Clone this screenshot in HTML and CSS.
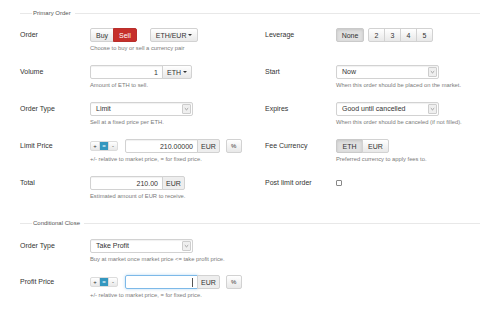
FILE: index.html
```html
<!DOCTYPE html>
<html lang="en">
<head>
    <meta charset="UTF-8">
    <meta name="viewport" content="width=device-width, initial-scale=1.0">
    <title>Place Order</title>
    <link rel="stylesheet" href="styles.css">
</head>
<body>

<main class="page">

    <!-- Primary order -->
    <section class="section">
        <div class="legend">Primary Order</div>

        <div class="form-grid">
            <div class="label">Order</div>
            <div class="control">
                <div class="line">
                    <div class="btn-group">
                        <button class="btn">Buy</button>
                        <button class="btn btn-danger">Sell</button>
                    </div>
                    <button class="btn pair-button">ETH/EUR <span class="caret"></span></button>
                </div>
                <p class="help">Choose to buy or sell a currency pair</p>
            </div>

            <div class="label">Leverage</div>
            <div class="control">
                <div class="line">
                    <div class="btn-group">
                        <button class="btn btn-active lev-none">None</button>
                    </div>
                    <div class="btn-group lev-group">
                        <button class="btn lev">2</button>
                        <button class="btn lev">3</button>
                        <button class="btn lev">4</button>
                        <button class="btn lev">5</button>
                    </div>
                </div>
            </div>

            <div class="label">Volume</div>
            <div class="control">
                <div class="line">
                    <div class="input-group">
                        <div class="field">1</div>
                        <button class="btn addon-btn">ETH <span class="caret"></span></button>
                    </div>
                </div>
                <p class="help">Amount of ETH to sell.</p>
            </div>

            <div class="label">Start</div>
            <div class="control">
                <div class="line">
                    <div class="select">
                        <span class="select-text">Now</span>
                        <span class="select-arrow"><svg width="5" height="4" viewBox="0 0 5 4"><path d="M0.8 1.2 L2.5 2.8 L4.2 1.2" fill="none" stroke="#888" stroke-width="0.8"/></svg></span>
                    </div>
                </div>
                <p class="help">When this order should be placed on the market.</p>
            </div>

            <div class="label">Order Type</div>
            <div class="control">
                <div class="line">
                    <div class="select">
                        <span class="select-text">Limit</span>
                        <span class="select-arrow"><svg width="5" height="4" viewBox="0 0 5 4"><path d="M0.8 1.2 L2.5 2.8 L4.2 1.2" fill="none" stroke="#888" stroke-width="0.8"/></svg></span>
                    </div>
                </div>
                <p class="help">Sell at a fixed price per ETH.</p>
            </div>

            <div class="label">Expires</div>
            <div class="control">
                <div class="line">
                    <div class="select">
                        <span class="select-text">Good until cancelled</span>
                        <span class="select-arrow"><svg width="5" height="4" viewBox="0 0 5 4"><path d="M0.8 1.2 L2.5 2.8 L4.2 1.2" fill="none" stroke="#888" stroke-width="0.8"/></svg></span>
                    </div>
                </div>
                <p class="help">When this order should be canceled (if not filled).</p>
            </div>

            <div class="label">Limit Price</div>
            <div class="control">
                <div class="line">
                    <div class="btn-group mode-group">
                        <button class="btn btn-xs">+</button>
                        <button class="btn btn-xs btn-info">=</button>
                        <button class="btn btn-xs">-</button>
                    </div>
                    <div class="input-group">
                        <div class="field">210.00000</div>
                        <span class="addon">EUR</span>
                    </div>
                    <button class="btn percent">%</button>
                </div>
                <p class="help">+/- relative to market price, = for fixed price.</p>
            </div>

            <div class="label">Fee Currency</div>
            <div class="control">
                <div class="line">
                    <div class="btn-group">
                        <button class="btn btn-active fee">ETH</button>
                        <button class="btn fee">EUR</button>
                    </div>
                </div>
                <p class="help">Preferred currency to apply fees to.</p>
            </div>

            <div class="label">Total</div>
            <div class="control">
                <div class="line">
                    <div class="input-group">
                        <div class="field">210.00</div>
                        <span class="addon">EUR</span>
                    </div>
                </div>
                <p class="help">Estimated amount of EUR to receive.</p>
            </div>

            <div class="label">Post limit order</div>
            <div class="control">
                <div class="line">
                    <span class="checkbox"></span>
                </div>
            </div>
        </div>
    </section>

    <!-- Conditional close -->
    <section class="section conditional">
        <div class="legend">Conditional Close</div>

        <div class="form-grid">
            <div class="label">Order Type</div>
            <div class="control">
                <div class="line">
                    <div class="select">
                        <span class="select-text">Take Profit</span>
                        <span class="select-arrow"><svg width="5" height="4" viewBox="0 0 5 4"><path d="M0.8 1.2 L2.5 2.8 L4.2 1.2" fill="none" stroke="#888" stroke-width="0.8"/></svg></span>
                    </div>
                </div>
                <p class="help">Buy at market once market price &lt;= take profit price.</p>
            </div>
            <div></div>
            <div></div>

            <div class="label">Profit Price</div>
            <div class="control">
                <div class="line">
                    <div class="btn-group mode-group">
                        <button class="btn btn-xs">+</button>
                        <button class="btn btn-xs btn-info">=</button>
                        <button class="btn btn-xs">-</button>
                    </div>
                    <div class="input-group">
                        <div class="field field-focus"><span class="text-caret"></span></div>
                        <span class="addon">EUR</span>
                    </div>
                    <button class="btn percent">%</button>
                </div>
                <p class="help">+/- relative to market price, = for fixed price.</p>
            </div>
        </div>
    </section>

</main>

</body>
</html>
```

FILE: styles.css
```css
* {
    box-sizing: border-box;
}

body {
    margin: 0;
    font-family: "Liberation Sans", Arial, sans-serif;
    color: #333;
    background-color: #fff;
}

.page {
    padding: 8px 0 0 20px;
}

/* fieldset-like heading with a rule on both sides */
.legend {
    display: flex;
    align-items: center;
    height: 10px;
    font-size: 6px;
    color: #555;
}

.legend::before {
    content: "";
    width: 12px;
    margin-right: 1px;
    border-top: 1px solid #e8e8e8;
}

.legend::after {
    content: "";
    flex: 1;
    margin-left: 4px;
    border-top: 1px solid #e8e8e8;
}

.form-grid {
    display: grid;
    grid-template-columns: 70px 175px 71px 1fr;
    grid-auto-rows: 37px;
    margin-top: 10px;
}

.conditional {
    margin-top: 5px;
}

.conditional .form-grid {
    margin-top: 11px;
    grid-auto-rows: 36px;
}

.label {
    font-size: 7px;
    line-height: 14px;
}

.line {
    display: flex;
    align-items: center;
    height: 14px;
}

.help {
    margin: 3px 0 0;
    font-size: 5.8px;
    line-height: 7px;
    color: #7a7a7a;
    white-space: nowrap;
}

/* buttons */
.btn {
    display: inline-flex;
    align-items: center;
    justify-content: center;
    height: 14px;
    padding: 0 5px;
    font-family: inherit;
    font-size: 7px;
    color: #333;
    background: linear-gradient(#fff, #e8e8e8);
    border: 1px solid #d2d2d2;
    border-radius: 2px;
}

.btn-danger {
    color: #fff;
    background: #c62f2b;
    border-color: #b8302c;
}

.btn-info {
    color: #fff;
    background: #3497bf;
    border-color: #2f8db3;
}

.btn-active {
    background: #e0e0e0;
    border-color: #cacaca;
    box-shadow: inset 0 1px 3px rgba(0, 0, 0, 0.12);
}

.btn-group {
    display: flex;
}

.btn-group .btn + .btn {
    margin-left: -1px;
}

.btn-group .btn:not(:first-child) {
    border-top-left-radius: 0;
    border-bottom-left-radius: 0;
}

.btn-group .btn:not(:last-child) {
    border-top-right-radius: 0;
    border-bottom-right-radius: 0;
}

.pair-button {
    margin-left: 13px;
}

.caret {
    display: inline-block;
    width: 0;
    height: 0;
    margin-left: 2px;
    border-top: 2px solid #333;
    border-left: 2px solid transparent;
    border-right: 2px solid transparent;
}

.lev-none {
    width: 28px;
}

.lev-group {
    margin-left: 4px;
}

.lev {
    width: 17px;
    padding: 0;
}

.fee {
    width: 27px;
    padding: 0;
}

.btn-xs {
    width: 10px;
    height: 10px;
    padding: 0;
    font-size: 6px;
    border-color: #dcdcdc;
}

.mode-group {
    margin-right: 7px;
}

.percent {
    width: 16px;
    margin-left: 6px;
    padding: 0;
    font-size: 6px;
}

/* inputs */
.input-group {
    display: flex;
}

.field {
    display: flex;
    align-items: center;
    justify-content: flex-end;
    width: 73px;
    height: 14px;
    padding: 0 4px;
    font-size: 7px;
    border: 1px solid #d2d2d2;
    border-radius: 2px 0 0 2px;
    box-shadow: inset 0 1px 1px rgba(0, 0, 0, 0.06);
}

.field-focus {
    border-color: #7db9e8;
    box-shadow: 0 0 3px rgba(102, 175, 233, 0.5);
}

.text-caret {
    width: 1px;
    height: 9px;
    background: #555;
}

.addon {
    display: flex;
    align-items: center;
    height: 14px;
    margin-left: -1px;
    padding: 0 3px;
    font-size: 7px;
    background: #eee;
    border: 1px solid #d2d2d2;
    border-radius: 0 2px 2px 0;
}

.addon-btn {
    width: 30px;
    margin-left: -1px;
    padding: 0;
    border-radius: 0 2px 2px 0;
}

.select {
    display: flex;
    width: 103px;
    height: 14px;
    font-size: 7px;
    border: 1px solid #d2d2d2;
    border-radius: 2px;
    box-shadow: inset 0 1px 1px rgba(0, 0, 0, 0.06);
}

.select-text {
    flex: 1;
    padding-left: 5px;
    line-height: 12px;
}

.select-arrow {
    display: flex;
    align-items: center;
    justify-content: center;
    width: 9px;
    margin: 1px;
    background: #efefef;
    border: 1px solid #cdcdcd;
    border-radius: 1px;
}

.checkbox {
    width: 6px;
    height: 6px;
    border: 1px solid #888;
    border-radius: 1px;
    background: #fff;
}
```
